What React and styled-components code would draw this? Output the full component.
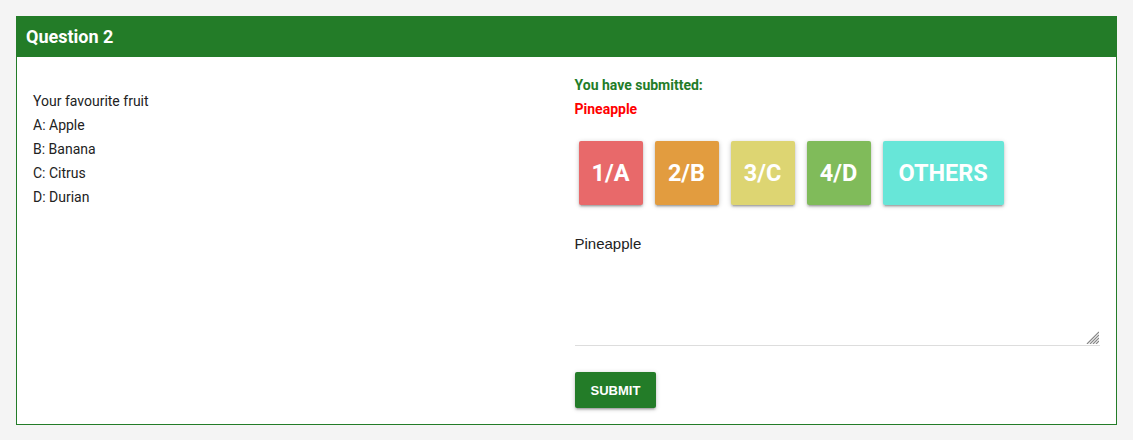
import React from 'react';
import styled, { createGlobalStyle } from 'styled-components';

const GREEN = '#237c28';

const GlobalStyle = createGlobalStyle`
  body {
    margin: 0;
    background: #f4f4f4;
    font-family: Roboto, "Liberation Sans", Arial, sans-serif;
  }
  * { box-sizing: border-box; }
`;

const Page = styled.div`
  padding: 16px;
`;

const Card = styled.div`
  background: #fff;
  border: 1px solid ${GREEN};
`;

const Header = styled.div`
  height: 40px;
  display: flex;
  align-items: center;
  padding: 0 9px 1px;
  background: ${GREEN};
  color: #fff;
  font-size: 18px;
  font-weight: 700;
`;

const Body = styled.div`
  display: grid;
  grid-template-columns: 1fr 1fr;
  column-gap: 16px;
  padding: 16px;
`;

const QuestionCol = styled.div`
  padding-top: 16px;
  font-size: 14px;
  line-height: 24px;
  color: #222;
`;

const AnswerCol = styled.div`
  display: flex;
  flex-direction: column;
  align-items: flex-start;
`;

const Status = styled.div`
  font-size: 14px;
  font-weight: 700;
  line-height: 24px;
  color: ${(props) => props.color};
`;

const Choices = styled.div`
  display: flex;
  gap: 12px;
  margin: 20px 0 0 4px;
`;

const Choice = styled.button`
  height: 64px;
  min-width: 64px;
  padding: 0 ${(props) => (props.$wide ? '16px' : '0')};
  border: none;
  border-radius: 2px;
  background: ${(props) => props.$bg};
  color: #fff;
  font-family: Roboto, sans-serif;
  font-size: 23.5px;
  font-weight: 700;
  cursor: pointer;
  box-shadow: 0 2px 2px 0 rgba(0, 0, 0, 0.14), 0 3px 1px -2px rgba(0, 0, 0, 0.12),
    0 1px 5px 0 rgba(0, 0, 0, 0.2);
`;

const AnswerField = styled.div`
  position: relative;
  width: 100%;
  margin-top: 22px;
`;

const Answer = styled.textarea`
  display: block;
  width: 100%;
  height: 119px;
  padding: 6px 0;
  border: none;
  border-bottom: 1px solid #ddd;
  outline: none;
  resize: none;
  font-family: "Liberation Sans", Arial, sans-serif;
  font-size: 15px;
  line-height: 1.5;
  color: #222;
  background: transparent;
`;

const Grip = styled.svg`
  position: absolute;
  right: 1px;
  bottom: 2px;
  width: 14px;
  height: 14px;
  pointer-events: none;
`;

const SubmitButton = styled.button`
  margin-top: 26px;
  height: 36px;
  padding: 0 16px;
  border: none;
  border-radius: 2px;
  background: ${GREEN};
  color: #fff;
  font-family: "Liberation Sans", Arial, sans-serif;
  font-size: 13px;
  font-weight: 700;
  text-transform: uppercase;
  cursor: pointer;
  box-shadow: 0 2px 2px 0 rgba(0, 0, 0, 0.14), 0 3px 1px -2px rgba(0, 0, 0, 0.12),
    0 1px 5px 0 rgba(0, 0, 0, 0.2);
`;

const choices = [
  { label: '1/A', bg: '#e8696a' },
  { label: '2/B', bg: '#e29c3f' },
  { label: '3/C', bg: '#ddd572' },
  { label: '4/D', bg: '#80bb5a' },
  { label: 'OTHERS', bg: '#67e6d8', wide: true },
];

const App = () => {
  return (
    <Page>
      <GlobalStyle />
      <Card>
        <Header>Question 2</Header>
        <Body>
          <QuestionCol>
            <div>Your favourite fruit</div>
            <div>A: Apple</div>
            <div>B: Banana</div>
            <div>C: Citrus</div>
            <div>D: Durian</div>
          </QuestionCol>
          <AnswerCol>
            <Status color={GREEN}>You have submitted:</Status>
            <Status color="#ff0000">Pineapple</Status>
            <Choices>
              {choices.map((c) => (
                <Choice key={c.label} $bg={c.bg} $wide={c.wide}>
                  {c.label}
                </Choice>
              ))}
            </Choices>
            <AnswerField>
              <Answer defaultValue="Pineapple" />
              <Grip viewBox="0 0 14 14">
                {[2, 5, 8, 11].map((o) => (
                  <line key={o} x1={o} y1="14" x2="14" y2={o} stroke="#888" strokeWidth="1.2" />
                ))}
              </Grip>
            </AnswerField>
            <SubmitButton>Submit</SubmitButton>
          </AnswerCol>
        </Body>
      </Card>
    </Page>
  );
};

export default App;
